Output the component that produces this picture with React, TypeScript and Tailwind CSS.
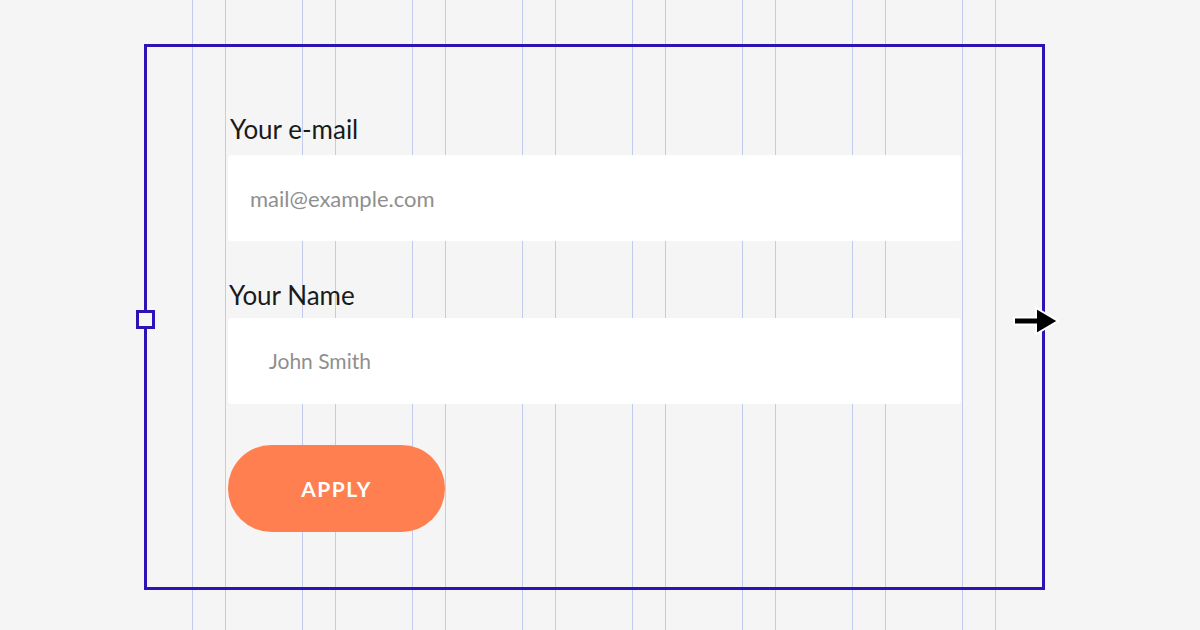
import React from 'react';

const guides = [0, 1, 2, 3, 4, 5, 6, 7];

const App: React.FC = () => {
  return (
    <div
      className="relative w-[1200px] h-[630px] overflow-hidden bg-[#f5f5f5]"
      style={{ fontFamily: 'Lato, "Liberation Sans", sans-serif' }}
    >
      {/* layout guides */}
      <div className="absolute inset-0 flex gap-[76px] pl-[192px]">
        {guides.map((g) => (
          <div key={g} className="w-[34px] h-full border-x border-[#c2caee]" />
        ))}
      </div>

      <div className="relative ml-[144px] mt-[44px] w-[901px] h-[546px] border-[3px] border-[#2b13b5]">
        <div className="absolute left-[-11px] top-[263px] w-[19px] h-[19px] border-[3px] border-[#2b13b5] bg-[#f5f5f5]" />
        <svg
          className="absolute left-[866px] top-[259px]"
          width="48"
          height="30"
          viewBox="0 0 48 30"
        >
          <path
            d="M1 11.5 H23 V2 L45 15 L23 28 V18.5 H1 Z"
            fill="#000"
            stroke="#fff"
            strokeWidth="2"
            strokeLinejoin="miter"
          />
        </svg>

        <div className="flex flex-col pl-[81px] pt-[66px]">
          <label className="text-[26px] leading-[32px] text-[#1a1a1a] pl-[2px]">Your e-mail</label>
          <div className="mt-[10px] w-[733px] h-[86px] bg-white rounded-[4px] flex items-center pl-[22px]">
            <span className="text-[22px] text-[#8f8f8f]">mail@example.com</span>
          </div>

          <label className="mt-[38px] text-[26px] leading-[32px] text-[#1a1a1a] pl-[1px]">Your Name</label>
          <div className="mt-[7px] w-[733px] h-[86px] bg-white rounded-[4px] flex items-center pl-[41px]">
            <span className="text-[21px] text-[#8f8f8f]">John Smith</span>
          </div>

          <button className="mt-[41px] w-[217px] h-[87px] rounded-full bg-[#ff7f50] text-white text-[21px] font-bold tracking-[1.5px] flex items-center justify-center">
            APPLY
          </button>
        </div>
      </div>
    </div>
  );
};

export default App;
